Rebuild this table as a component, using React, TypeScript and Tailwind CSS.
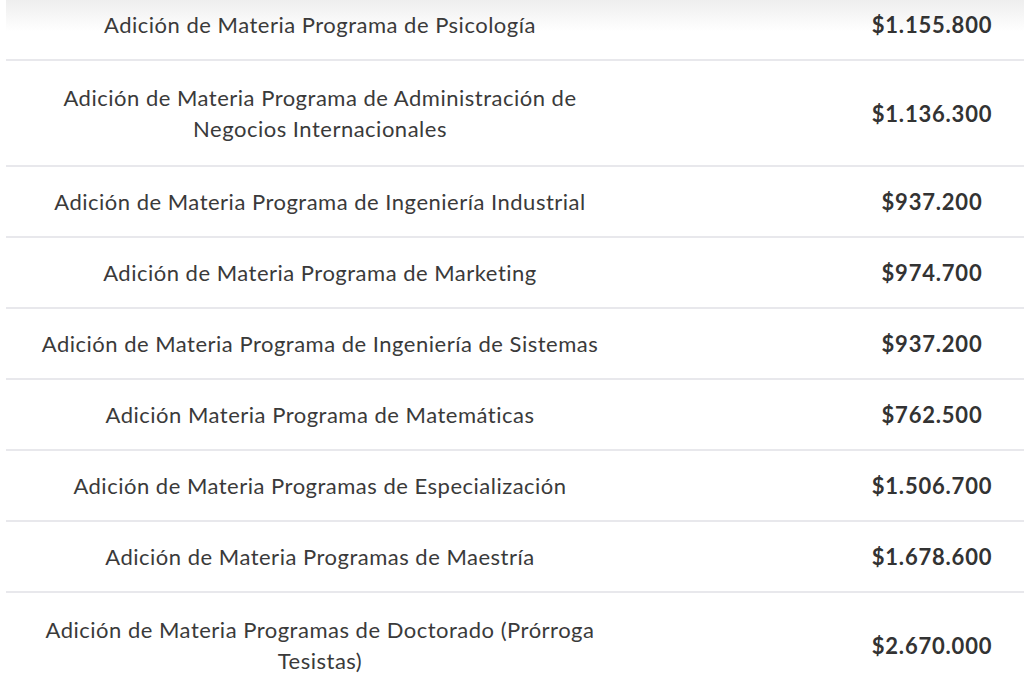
const rows = [
  { name: "Adición de Materia Programa de Psicología", price: "$1.155.800", tall: false },
  { name: "Adición de Materia Programa de Administración de Negocios Internacionales", price: "$1.136.300", tall: true },
  { name: "Adición de Materia Programa de Ingeniería Industrial", price: "$937.200", tall: false },
  { name: "Adición de Materia Programa de Marketing", price: "$974.700", tall: false },
  { name: "Adición de Materia Programa de Ingeniería de Sistemas", price: "$937.200", tall: false },
  { name: "Adición Materia Programa de Matemáticas", price: "$762.500", tall: false },
  { name: "Adición de Materia Programas de Especialización", price: "$1.506.700", tall: false },
  { name: "Adición de Materia Programas de Maestría", price: "$1.678.600", tall: false },
  { name: "Adición de Materia Programas de Doctorado (Prórroga Tesistas)", price: "$2.670.000", tall: true },
];

export default function App() {
  return (
    <div className="h-[684px] w-[1024px] overflow-hidden bg-white font-['Lato','Liberation_Sans',sans-serif]">
      <div className="-mt-[10px] ml-[6px] w-[1224px] bg-[linear-gradient(to_bottom,#e9e9e9_0px,#ffffff_42px)]">
        {rows.map((r, i) => (
          <div
            key={i}
            className={`flex items-center border-b-2 border-[#e8e8ec] ${r.tall ? "h-[106px]" : "h-[71px]"}`}
          >
            <div className="w-[628px] px-[24px] text-center text-[22px] leading-[31px] tracking-[0.5px] text-[#3a3a3a]">
              {r.name}
            </div>
            <div className="w-[596px] text-center text-[22px] leading-[31px] tracking-[0.8px] font-bold text-[#333333]">
              {r.price}
            </div>
          </div>
        ))}
      </div>
    </div>
  );
}
